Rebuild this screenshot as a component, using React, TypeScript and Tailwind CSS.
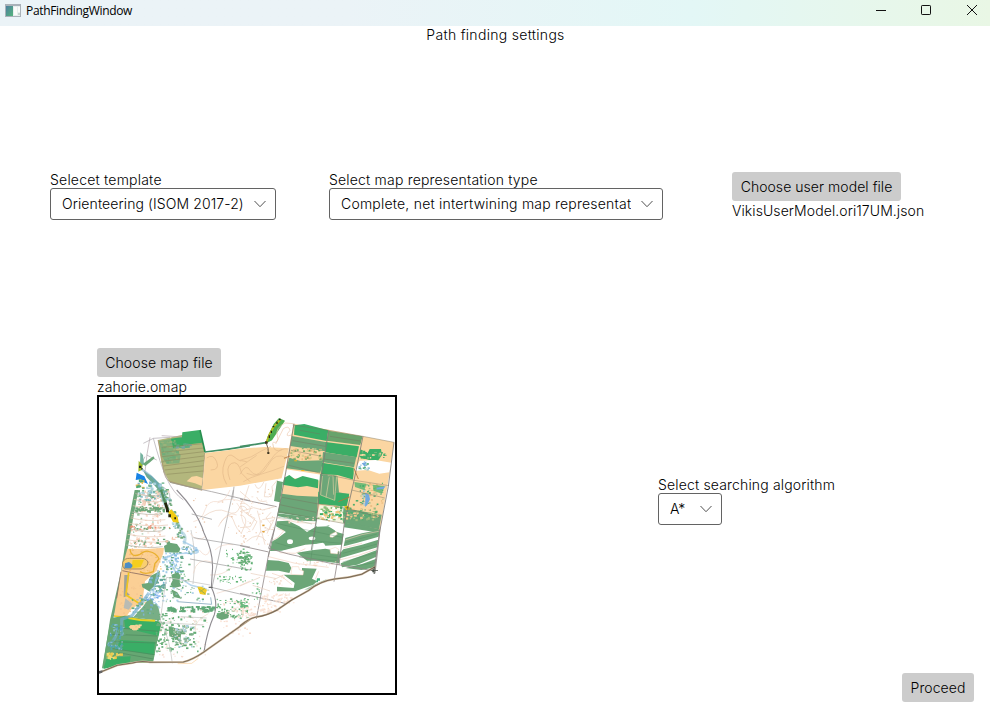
import React from "react";

type Pt = [number, number];

// Deterministic scatter of small vegetation / contour marks inside a box.
function Scatter({ x, y, w, h, n, seed, colors, size = 5, slope = 0 }: {
  x: number; y: number; w: number; h: number; n: number; seed: number; colors: string[]; size?: number; slope?: number;
}) {
  let s = seed * 7919 + 17;
  const rnd = () => {
    s = (s * 1103515245 + 12345) % 2147483648;
    return s / 2147483648;
  };
  const marks = Array.from({ length: n }, (_, i) => {
    const px = x + rnd() * w;
    const py = y + rnd() * h;
    const mw = size * (0.5 + rnd());
    const mh = size * (0.4 + rnd() * 0.7);
    return <rect key={i} x={px + (py - y) * slope} y={py} width={mw} height={mh} fill={colors[i % colors.length]} />;
  });
  return <>{marks}</>;
}

const G = "#3aae66";
const M = "#6ca678";
const O = "#fbd6a2";
const pts = (p: Pt[]) => p.map((q) => q.join(",")).join(" ");
const P = ({ p, f }: { p: Pt[]; f: string }) => <polygon points={pts(p)} fill={f} />;
const L = ({ d, c, w = 2, o = 1 }: { d: string; c: string; w?: number; o?: number }) => (
  <path d={d} fill="none" stroke={c} strokeWidth={w} opacity={o} />
);

function MapWest() {
  return (
    <g transform="translate(90 340) scale(.33333)">
      <P p={[[204, 300], [245, 292], [330, 272], [345, 338], [335, 450], [290, 440], [240, 428], [220, 395], [210, 345]]} f="#b3b77d" />
      <P p={[[207, 303], [245, 296], [252, 322], [272, 345], [268, 370], [230, 372], [216, 350]]} f="#83af7b" />
      <P p={[[243, 296], [276, 291], [277, 277], [329, 270], [337, 308], [300, 313], [250, 325]]} f={G} />
      <Scatter x={210} y={300} w={50} h={65} n={35} seed={5} colors={["#72ac79", "#99b37a"]} size={7} />
      <Scatter x={250} y={310} w={50} h={11} n={12} seed={3} colors={["#75a5a1", "#5cad80"]} size={7} />
      <L d="M215 322L341 311M215 337L341 324M217 350L342 335M218 364L342 348M220 378L342 362M224 390L341 377M230 403L340 393" c="#8a875a" w={1.6} />
      <L d="M204 300Q215 340 219 380T242 425L336 451L345 338" c="#a78d6a" />
      <L d="M215 287L276 291M180 292Q170 340 165 395" c="#b3a5aa" />
      <L d="M330 270L345 336" c="#278f50" w={5} />
      <L d="M345 336Q410 330 480 317" c="#409067" w={5} />
      <P p={[[346, 339], [450, 326], [524, 321], [597, 325], [575, 415], [450, 437], [337, 450]]} f={O} />
      <P p={[[290, 424], [305, 410], [320, 408], [338, 414], [335, 438], [315, 430]]} f={O} />
      <L d="M350 354Q370 340 380 365T362 390M410 433Q390 400 404 365Q414 335 432 350T455 362L470 365M420 420Q405 380 425 370T455 400L480 425" c="#dfb484" w={1.8} />
      <L d="M160 388Q190 430 220 442T235 500M190 295Q210 370 230 415T280 480M160 310L190 295L240 292M170 345L200 360M150 380L165 350" c="#aaa5ab" w={2} />
      <P p={[[151, 337], [159, 345], [162, 373], [150, 380]]} f="#77b3a0" />
      <P p={[[146, 362], [158, 376], [155, 390], [145, 395]]} f="#9cba28" />
      <P p={[[160, 393], [185, 408], [208, 430], [225, 455], [228, 475], [215, 462], [195, 438], [170, 412]]} f="#6ba993" />
      <P p={[[140, 398], [163, 409], [174, 432], [160, 426], [153, 418], [137, 420]]} f="#1883e5" />
      <P p={[[158, 372], [190, 349], [194, 355], [180, 367], [166, 378]]} f={M} />
      <Scatter x={142} y={424} w={75} h={45} n={45} seed={8} colors={["#80b8c5", "#76b890", "#acd2de"]} size={7} />
      <Scatter x={137} y={418} w={18} h={28} n={15} seed={2} colors={["#ecb84c", "#4caa74"]} size={7} />
      <path d="M147 377h7v7h-7zM154 384h4v5h-4z" fill="#202a20" />
      <L d="M155 389Q185 405 202 431T232 500" c="#6baac7" w={6} o={0.5} />
      <Scatter x={143} y={442} w={88} h={40} n={50} seed={21} colors={["#67a977", "#79b7ba", "#a8cecd", "#f4d1bc"]} size={7} />
      <Scatter x={136} y={480} w={96} h={34} n={34} seed={22} colors={["#67a977", "#f4d1bc", "#f4d1bc"]} size={6} />
      <L d="M240 427L285 438L365 455L480 482M432 440L428 476" c="#9a9696" w={2.2} />
    </g>
  );
}

function MapSouthWest() {
  return (
    <g transform="translate(90 490) scale(.33333)">
      <P p={[[134, 0], [145, 0], [115, 165], [100, 280], [65, 402], [36, 545], [60, 390], [93, 245], [116, 92]]} f={M} />
      <Scatter x={129} y={8} w={90} h={167} n={150} seed={31} colors={["#f4c6ae", "#f7d8c6", "#9dc3a1", "#eed3c7"]} size={5} slope={-0.08} />
      {[10, 28, 47, 66, 84, 100, 117, 133, 149, 165].map((y, i) => (
        <L key={y} d={`M${137 - y * 0.18} ${y}Q${175} ${y + 12} ${218 + (i % 3) * 8} ${y + 5}`} c={i % 3 ? "#e6c4b0" : "#b5ada0"} w={2} />
      ))}
      <Scatter x={125} y={48} w={95} h={15} n={35} seed={45} colors={[M]} size={7} />
      <Scatter x={118} y={105} w={120} h={12} n={28} seed={43} colors={[M, "#ec9277"]} size={5} />
      <Scatter x={125} y={140} w={130} h={20} n={28} seed={44} colors={[M, "#f4c6ae"]} size={6} />
      <L d="M212 5Q228 65 248 82T275 127Q291 135 282 163" c="#87bccc" w={9} o={0.5} />
      <Scatter x={214} y={8} w={22} h={135} n={55} seed={46} colors={["#6fa992", "#a3cede", "#6fa97a"]} size={6} slope={0.35} />
      <L d="M213 0L225 38L236 60" c="#568f61" w={7} />
      <P p={[[234, 66], [244, 58], [263, 81], [266, 98], [249, 96]]} f="#f1cb12" />
      <path d="M222 40l8-3 6 22-7 3zM228 60h9v7h-9zM235 73h8v9h-8zM253 82h5v6h-5z" fill="#25250e" />
      <P p={[[112, 176], [170, 177], [222, 173], [220, 190], [199, 243], [165, 274], [157, 340], [127, 354], [103, 388], [72, 378], [93, 245]]} f="#fbcf95" />
      <Scatter x={116} y={178} w={95} h={65} n={60} seed={51} colors={["#efb56c", "#f7bb73", "#ffda9e"]} size={4} />
      <Scatter x={88} y={278} w={75} h={90} n={50} seed={54} colors={["#f3c08c", "#f6c891"]} size={4} />
      <L d="M120 177Q123 205 150 193Q167 180 178 185Q198 188 207 207L195 220L190 245Q165 255 150 245" c="#e9b030" w={4} />
      <path d="M98 217Q104 204 119 205H155Q172 206 174 219Q171 233 154 237L104 237Q96 230 98 217Z" fill="#f9cf70" stroke="#9c7c54" strokeWidth="2.5" />
      <path d="M128 210l34-1-10 22-28 4z" fill="#f5ce1e" />
      <path d="M105 220l12-4 8 7 3 5-5 7-20 0z" fill="#4d8ec4" />
      <L d="M97 242L125 248L207 263M93 245L80 325" c="#8c6c60" w={2.5} />
      <P p={[[103, 255], [118, 255], [110, 305], [120, 315], [101, 322]]} f="#a0a39a" />
      <L d="M116 247L108 315L150 342L153 331M72 378L97 381L119 378" c="#eec61f" w={5} />
      <P p={[[106, 325], [128, 342], [116, 359], [101, 354]]} f="#b9bbb3" />
      <P p={[[155, 282], [174, 279], [183, 257], [210, 243], [203, 278], [177, 304], [157, 292]]} f={M} />
      <P p={[[180, 320], [204, 345], [213, 390], [194, 391], [130, 382], [158, 351]]} f="#78ae86" />
      <P p={[[63, 384], [105, 377], [216, 395], [202, 454], [189, 519], [112, 518], [36, 535], [51, 450]]} f="#66a773" />
      <P p={[[101, 380], [153, 391], [213, 397], [205, 438], [106, 414]]} f={G} />
      <P p={[[91, 450], [195, 456], [191, 495], [75, 476]]} f={G} />
      <P p={[[50, 505], [122, 499], [119, 520], [40, 537]]} f={G} />
      <L d="M73 413L205 424M67 433L201 438M60 455L198 459M68 476L194 494M85 488L190 507" c="#4f885e" w={2} />
      <L d="M115 384L151 390L195 392" c="#ead323" w={6} />
      <Scatter x={113} y={403} w={35} h={11} n={18} seed={36} colors={["#fad398"]} size={8} />
      <Scatter x={49} y={486} w={40} h={18} n={26} seed={39} colors={["#efca4b", "#eadb78"]} size={7} />
      <L d="M53 467Q82 445 82 420M95 438L95 388L126 377L177 309" c="#72acc9" w={9} o={0.7} />
      <Scatter x={62} y={400} w={45} h={75} n={70} seed={61} colors={["#4fa4bf", "#5ba89d", "#8bbcd8", "#66a773"]} size={6} slope={-0.15} />
      <Scatter x={175} y={250} w={48} h={65} n={50} seed={63} colors={["#65ac83", "#7fb5ce", "#67a7a1"]} size={7} />
      <Scatter x={125} y={310} w={75} h={62} n={40} seed={64} colors={["#65ac83", "#7fb5ce"]} size={6} slope={-0.1} />
      <path d="M222 168l17-10 22 4 10 14-4 12-42-1z" fill={M} />
      <Scatter x={216} y={184} w={60} h={60} n={85} seed={65} colors={["#86bce2", "#67a98b", "#a1cce9", "#fff"]} size={6} />
      <L d="M218 207Q250 188 298 190T308 169L278 154M205 240L185 325L210 355M236 210L265 260L303 286L350 297" c="#92c2e3" w={5} o={0.65} />
      <Scatter x={262} y={166} w={52} h={24} n={24} seed={66} colors={["#86bce2", "#b5d6ef", "#77ab9a"]} size={6} />
      <Scatter x={170} y={304} w={35} h={40} n={44} seed={67} colors={["#70a6eb", "#b5d6ef", "#fff"]} size={6} />
      <path d="M244 254l20-7 8 10-5 16 7 16-25 6-7-12 6-12zM244 298l18 9 12 19-23-5zM236 409l22 6 27 5-12 14-2 23-20-14-13-4z" fill={M} />
      <Scatter x={212} y={282} w={145} h={50} n={42} seed={71} colors={["#62ae7a", "#aed2ea", "#95bfa2"]} size={5} />
      <Scatter x={229} y={348} w={140} h={14} n={62} seed={73} colors={["#60a877"]} size={8} />
      <Scatter x={197} y={369} w={50} h={120} n={60} seed={75} colors={["#67ae79"]} size={6} />
      <Scatter x={235} y={375} w={110} h={110} n={45} seed={78} colors={["#65ae78", "#9cc8a6"]} size={6} />
      <Scatter x={252} y={403} w={58} h={67} n={55} seed={79} colors={["#62a66e", "#8bb59a", "#abd0df"]} size={7} />
      <Scatter x={207} y={355} w={145} h={145} n={90} seed={80} colors={["#f8dcd0", "#f5e0d5"]} size={4} />
      <Scatter x={230} y={216} w={70} h={60} n={26} seed={81} colors={["#66af7a"]} size={5} />
      <Scatter x={380} y={257} w={85} h={23} n={25} seed={82} colors={["#60b474"]} size={4.5} />
      <Scatter x={408} y={175} w={70} h={68} n={34} seed={83} colors={["#60b474"]} size={4.5} />
      <Scatter x={442} y={185} w={35} h={32} n={30} seed={84} colors={["#67ac75"]} size={6} />
      <Scatter x={375} y={325} w={96} h={59} n={75} seed={85} colors={["#60b474", "#67ac75"]} size={5} />
      <path d="M379 375l17-10 22 2-3 17-20 6-15-7z" fill={M} />
      <path d="M322 290l12 0 17 9-5 16-16-3z" fill="#f1cb26" />
      <L d="M326 296L346 312M344 295L331 305" c="#a0b14d" w={3} />
      <L d="M262 335L365 343L362 322" c="#9cb9ca" w={3} />
      <L d="M230 262L222 310L210 398M210 395Q228 420 236 456T247 520M303 120Q320 193 309 282M210 398L340 405M230 262L360 285M272 380L350 384" c="#c6c5c2" w={2.2} />
      <L d="M310 95Q335 90 345 60T383 35Q420 20 464 37M328 180Q350 210 360 180M375 180Q395 160 430 164M310 250Q320 200 367 216M360 255Q400 257 425 232M380 310Q430 300 480 273M316 425Q310 393 355 371M420 0Q406 34 382 39M440 39L455 60Q450 102 480 120M300 130Q325 160 345 140M385 110Q410 60 440 75" c="#f2d8c9" w={2} />
      <Scatter x={280} y={25} w={195} h={120} n={22} seed={89} colors={["#ebc6aa"]} size={4} />
      <Scatter x={390} y={330} w={91} h={112} n={65} seed={90} colors={["#fae2d7", "#f8d9c8"]} size={5} />
      <L d="M260 0Q321 62 342 129Q372 190 367 245L364 292Q385 336 373 374Q351 423 342 486L320 500" c="#8f8c91" w={3.3} />
      <L d="M310 143L480 171M300 207L480 240M364 292L480 319M305 72L366 88" c="#a2a0a0" w={2.2} />
      <L d="M430 0L366 293" c="#a2a0a0" w={2.2} />
      <L d="M30 547L82 526L127 519Q154 511 180 517L280 516Q308 509 340 487L480 388" c="#d3bfa2" w={6} />
      <L d="M30 547L82 526L127 519Q154 511 180 517L280 516Q308 509 340 487L480 388" c="#7b6b59" w={3.2} />
      <path d="M27 543l10-2v7l-10 3zM356 290h12v4h-12z" fill="#666" />
      <L d="M263 521L305 520L325 505" c="#f8c990" w={3} o={0.6} />
    </g>
  );
}

function MapEast() {
  return (
    <g transform="translate(240 390) scale(.33333)">
      <L d="M0 170L40 164L77 158" c="#448f66" w={5} />
      <path d="M117 84l18 8-39 59-20 10 6-20 19-39z" fill="#4ead51" />
      <L d="M121 89L101 111L88 133L79 159" c="#b9bb1d" w={5} />
      <path d="M117 86h5v5h-5zM109 95h4v7h-4zM98 108h5v4h-5zM92 122h4v7h-4zM86 136h4v8h-4z" fill="#252916" />
      <path d="M75 154h8v7h-8zM82 186h6v6h-6z" fill="#36301e" />
      <L d="M79 160Q86 175 85 190" c="#51422d" w={2.5} />
      <L d="M98 157Q119 160 112 137T135 99L160 101M107 162L130 116Q147 105 150 121Q130 143 155 135" c="#edc8ae" w={2} />
      <L d="M0 253Q18 218 31 242Q48 266 68 240T106 192Q127 173 143 177M0 211Q35 204 64 183L93 169M20 250Q62 269 84 226T141 205M98 160Q101 191 126 179M10 275Q30 262 62 253T132 229M0 231L50 196" c="#e0b98c" w={1.8} />
      <P p={[[160, 101], [267, 119], [369, 139], [345, 281], [316, 400], [230, 386], [115, 363], [130, 278], [147, 175]]} f={O} />
      <P p={[[164, 106], [193, 102], [265, 121], [260, 153], [162, 134]]} f={G} />
      <P p={[[265, 122], [368, 139], [361, 165], [260, 152]]} f="#68a36b" />
      <P p={[[156, 138], [260, 157], [256, 184], [151, 168]]} f={M} />
      <P p={[[257, 156], [357, 169], [350, 202], [256, 187]]} f={G} />
      <P p={[[249, 186], [349, 201], [342, 232], [246, 216]]} f={M} />
      <P p={[[148, 203], [181, 213], [250, 211], [241, 248], [139, 235]]} f={M} />
      <P p={[[246, 218], [341, 233], [341, 269], [292, 255], [243, 253]]} f={G} />
      <P p={[[138, 238], [244, 254], [238, 272], [132, 262]]} f="#fff" />
      <P p={[[133, 263], [148, 255], [165, 268], [188, 258], [235, 269], [234, 295], [201, 288], [174, 292], [128, 284]]} f={G} />
      <P p={[[240, 252], [292, 257], [297, 307], [327, 313], [323, 347], [235, 328]]} f={M} />
      <P p={[[235, 305], [328, 311], [320, 350], [233, 341]]} f={G} />
      <P p={[[241, 255], [290, 258], [286, 330], [238, 315]]} f={M} />
      <P p={[[126, 311], [171, 317], [234, 320], [230, 386], [113, 368]]} f={M} />
      <P p={[[111, 272], [129, 276], [120, 337], [102, 333]]} f={M} />
      <Scatter x={148} y={173} w={95} h={32} n={60} seed={101} colors={["#e7b57c", "#78ac66", "#dacd8e"]} size={6} />
      <P p={[[239, 346], [326, 350], [345, 386], [315, 402], [229, 384]]} f="#f8f5df" />
      <Scatter x={232} y={348} w={90} h={40} n={100} seed={103} colors={[G, "#8bbe79", "#fff", "#f1c37c"]} size={7} />
      <P p={[[368, 139], [462, 157], [449, 247], [420, 421], [309, 399], [337, 275], [352, 203]]} f={O} />
      <path d="M361 178l22 11 6-12 34 0 3 18-12 17-27-2-29-9z" fill={G} />
      <P p={[[359, 212], [406, 210], [454, 218], [448, 247], [418, 251], [384, 240], [344, 242]]} f="#fff" />
      <Scatter x={358} y={182} w={92} h={20} n={28} seed={109} colors={[G, "#73b77a", O]} size={6} />
      <Scatter x={355} y={212} w={30} h={30} n={20} seed={110} colors={["#acd1d3", "#8cbce0", "#5fb27f"]} size={5} />
      <P p={[[310, 354], [425, 374], [417, 418], [309, 398]]} f={M} />
      <Scatter x={308} y={352} w={105} h={36} n={75} seed={111} colors={["#f3c88f", "#55ad70", "#9cbb7e"]} size={6} />
      <Scatter x={338} y={278} w={90} h={68} n={65} seed={112} colors={["#e9bb80", "#4fae6e", "#abc189"]} size={5} />
      <path d="M343 276l36 5-6 20-28-10zM399 284l35 4-8 23-26-9z" fill={G} opacity=".7" />
      <path d="M375 308l12 6 3 14-8 17-7 6 1-27zM365 220l15-5-6 15zM410 293l27-4-7 8-20 2z" fill="#72a9df" />
      <Scatter x={363} y={299} w={10} h={50} n={12} seed={115} colors={["#69a985", "#a4c8dc"]} size={5} />
      <path d="M313 348l13-1 4 11-12 3z" fill="#e9c615" /><path d="M320 350h5v5h-5z" fill="#54491d" />
      <L d="M247 258L242 315L284 331L286 304L290 258M268 262L258 323M263 257L279 257L281 314" c="#c6c798" w={2.5} />
      <path d="M163 211h8v3h-8zM184 240h9v3h-9z" fill="#efb520" />
      <L d="M158 105L265 121L369 139L462 157M158 152L256 169M153 181L241 198M147 226L243 250L343 271L447 287M126 322L235 342L322 354M119 344L228 367M117 365L420 420M270 139L361 153M251 207L342 220M335 300L434 324M321 355L419 382M180 121L240 132" c="#77715d" w={1.8} o={0.7} />
      <MapForestStrips />
      <L d="M162 101L139 238L115 365L85 500M266 121L245 250L230 384L214 480M369 139L342 272L313 400L297 525M462 157L445 289L420 420L405 550" c="#807c76" w={2.5} />
      <L d="M132 205L150 198M295 335L329 321M342 235L355 267" c="#b3753c" w={2.5} />
      <L d="M86 475L145 492L272 520L403 543M103 417L86 475M402 542L421 411M87 487L49 687M297 486L282 575M0 467L86 486M0 610L135 640M0 327L110 350" c="#918787" w={2.4} />
      <L d="M0 365L41 353L68 360L105 350M27 286L14 325Q-8 342 11 364L51 395L37 421M45 283Q55 312 72 275M78 280L73 320Q105 327 96 290L113 269M50 321Q55 339 80 333M0 341Q19 335 32 355L24 374L45 385L31 410L0 413M0 375Q20 377 17 400L3 432M52 362Q63 389 62 424L49 451M67 389L105 382L88 418L65 425L75 464M20 454Q55 422 78 453M0 304Q25 325 40 339M93 367L78 384L93 402L81 431M0 350Q15 345 22 360M-60 400Q-30 360 -20 390T5 430M-110 380Q-70 350 -40 365T0 350" c="#ecd0bc" w={2} />
      <Scatter x={0} y={290} w={100} h={175} n={45} seed={155} colors={["#eccdb6", "#f3dbc9"]} size={4} />
      <Scatter x={65} y={370} w={6} h={55} n={3} seed={163} colors={["#e2a33b"]} size={5} />
      <Scatter x={60} y={610} w={95} h={30} n={60} seed={166} colors={["#fbdfce", "#f8e4d9"]} size={5} slope={0.2} />
      <Scatter x={52} y={640} w={70} h={25} n={35} seed={167} colors={["#fbdfce", "#f8e4d9"]} size={5} />
      <Scatter x={0} y={648} w={45} h={30} n={30} seed={168} colors={["#f8dfd1"]} size={5} />
      <Scatter x={0} y={488} w={36} h={50} n={30} seed={170} colors={["#5fae73"]} size={4.5} />
      <Scatter x={35} y={568} w={26} h={65} n={16} seed={171} colors={["#65b77a"]} size={4} />
      <Scatter x={0} y={620} w={18} h={34} n={24} seed={172} colors={["#65b77a"]} size={5} />
      <L d="M0 588L60 562M32 550L105 565M38 586L90 603M100 570L130 555" c="#e9cebc" w={2} />
      <L d="M0 708Q25 686 49 681Q80 677 113 659L155 630L205 602Q240 573 284 567Q324 565 365 553L406 530" c="#cfb99c" w={6} />
      <L d="M0 708Q25 686 49 681Q80 677 113 659L155 630L205 602Q240 573 284 567Q324 565 365 553L406 530" c="#776857" w={3.2} />
      <path d="M231 565h9v7h-6v5h-5z" fill="#48b27c" />
      <path d="M397 538h6v9h-6zM401 530h3v22h-3zM394 541h20v2h-20z" fill="#474d45" />
    </g>
  );
}

// Green strips of the south-east forest with their clearings.
function MapForestStrips() {
  return (
    <g transform="translate(66 354)">
      <path d="M46 16L165 30L163 40L110 38L47 24Z" fill={M} />
      <path d="M44 40L78 38L112 55L135 72L165 54L200 51L224 72L245 78L240 110L190 113L186 106L130 110L60 128L24 129L31 100L45 92L72 72L42 55Z" fill={M} />
      <path d="M165 45L243 62L240 72L222 68L198 55L165 56Z" fill="#fff" />
      <path d="M250 90L300 76L354 65L350 86L286 104L245 115Z" fill={M} />
      <path d="M244 124L300 110L349 95L346 118L290 134L228 152L232 138Z" fill={M} />
      <path d="M236 166L290 146L345 126L343 146L286 170L240 178Z" fill={M} />
      <path d="M250 180L300 168L343 152L340 178L298 186Z" fill={M} />
      <path d="M246 58L300 66L352 74L350 64L300 52L248 44Z" fill={M} />
      <path d="M104 134L150 127L190 122L232 130L231 166L165 158L135 158Z" fill={M} />
      <path d="M16 156L50 158L80 165L88 180L82 195L50 188L12 188Z" fill={M} />
      <path d="M120 180L164 182L150 212L166 220L154 230L100 250L45 250L45 236L95 240L98 225L65 200L120 200Z" fill={M} />
      <path d="M196 212L180 224L140 244L126 246L160 228Z" fill={M} opacity=".6" />
      <path d="M90 176l20 0 2 9 13 4-2 12-36-2zM204 124l16-6 10 6-4 14-20-2zM204 80l18-9 4 8-14 9-8-1z" fill="#fff" stroke="#f3cdb5" strokeWidth="1.5" />
      <ellipse cx="84" cy="101" rx="9" ry="7" fill="#fff" />
      <ellipse cx="150" cy="91" rx="10" ry="5.5" fill="#fff" />
      <path d="M120 117L182 104L188 113L140 121L60 139L28 135L60 129Z" fill="#fff" />
      <L d="M48 28L90 34L150 48M40 104L90 118M52 48L96 58L240 88M150 98L240 106M120 134L230 150M112 148L228 160M250 104L345 78M242 136L346 108M242 162L342 134M256 178L340 164M165 30L158 80L144 170" c="#4e875c" w={1.5} o={0.7} />
      <L d="M44 30L110 44L160 46M46 62L66 68L48 88L33 96M52 134L100 136L130 122M20 146L100 166L200 178M30 196L60 206L90 230M170 190L160 214M250 96L300 80L350 70M244 120L300 106M232 156L290 142L346 122" c="#f2cdb8" w={1.8} />
      <Scatter x={14} y={196} w={60} h={36} n={22} seed={158} colors={["#f7dfd0"]} size={4} />
      <Scatter x={70} y={26} w={90} h={16} n={18} seed={159} colors={["#f3d2bb", "#f8e0cf"]} size={4} />
      <Scatter x={100} y={158} w={140} h={14} n={24} seed={160} colors={["#f3d2bb", "#f8e0cf"]} size={4} />
    </g>
  );
}

function Chevron() {
  return (
    <svg className="h-2 w-3 shrink-0" viewBox="0 0 12 8" fill="none">
      <path d="M0.5 1L6 6.7L11.5 1" stroke="#505050" strokeWidth="1" />
    </svg>
  );
}

function Select({ text, className }: { text: string; className: string }) {
  return (
    <div className={`flex h-8 items-center justify-between rounded-[3px] border border-[#636363] bg-white pl-[11px] pr-[9px] ${className}`}>
      <span className="overflow-hidden whitespace-nowrap">{text}</span>
      <Chevron />
    </div>
  );
}

function Button({ children, className }: { children: React.ReactNode; className: string }) {
  return <button className={`flex h-[29px] items-center justify-center rounded-[3px] bg-[#cccccc] whitespace-nowrap ${className}`}>{children}</button>;
}

export default function App() {
  return (
    <div className="flex h-[720px] w-[990px] flex-col overflow-hidden bg-white font-['Inter',sans-serif] text-[14px] leading-4 font-light text-black">
      <header className="flex h-[26px] shrink-0 items-start justify-between bg-linear-to-r from-[#ebf3f7] from-35% via-[#e3f7f6] via-70% to-[#e9f7e5]">
        <div className="flex items-center gap-[5px] pt-[3px] pl-[5px]">
          <svg width="16" height="14" viewBox="0 0 16 14">
            <defs>
              <linearGradient id="pane" x2="1" y2="1"><stop stopColor="#4d7fa0" /><stop offset="1" stopColor="#55b47b" /></linearGradient>
            </defs>
            <path d="M0 0h16v13H0z" fill="#aab2b9" />
            <path d="M1 2h14v10H1z" fill="#e8eeee" />
            <path d="M1 2h7v10H1z" fill="url(#pane)" />
            <path d="M9 3h3v8H9zM13 3h2v5h-2z" fill="#fafcf9" />
            <path d="M13 9h2v2h-2z" fill="#c5d5cc" />
          </svg>
          <span className="font-['Open_Sans','Noto_Sans',sans-serif] text-[12px] font-normal tracking-[-0.33px] text-black">PathFindingWindow</span>
        </div>
        <svg width="114" height="20" viewBox="0 0 114 20" fill="none" stroke="#111">
          <path d="M0 10.5h10" />
          <rect x="45.5" y="5.5" width="9" height="9" rx=".7" />
          <path d="M91 5l10 10M101 5L91 15" />
        </svg>
      </header>
      <h1 className="mt-px self-center pl-px text-[14px] leading-4 tracking-[0.3px]">Path finding settings</h1>
      <section className="mt-[129px] flex h-12 items-start pl-[50px]">
        <div className="w-[279px]">
          <div className="tracking-[0.21px]">Selecet template</div>
          <Select text="Orienteering (ISOM 2017-2)" className="w-[226px] tracking-[0.1px]" />
        </div>
        <div className="w-[403px]">
          <div className="tracking-[0.19px]">Select map representation type</div>
          <Select text="Complete, net intertwining map representat" className="w-[334px] tracking-[0.21px]" />
        </div>
        <div>
          <Button className="w-[169px] tracking-[0.05px]">Choose user model file</Button>
          <div className="mt-[2px] tracking-[0.08px]">VikisUserModel.ori17UM.json</div>
        </div>
      </section>
      <section className="mt-32 flex items-start pl-[97px]">
        <div className="w-[561px]">
          <Button className="w-[124px] tracking-[0.1px]">Choose map file</Button>
          <div className="mt-[2px] tracking-[0.08px]">zahorie.omap</div>
          <div className="h-[300px] w-[300px] border-2 border-black bg-white">
            <svg className="block h-full w-full" viewBox="99 397 296 296">
              <MapWest />
              <MapSouthWest />
              <MapEast />
            </svg>
          </div>
        </div>
        <div className="pt-[129px]">
          <div className="tracking-[0.16px]">Select searching algorithm</div>
          <Select text="A*" className="w-16" />
        </div>
      </section>
      <footer className="-mt-[22px] flex justify-end pr-4">
        <Button className="w-[72px] tracking-[0.08px]">Proceed</Button>
      </footer>
    </div>
  );
}
